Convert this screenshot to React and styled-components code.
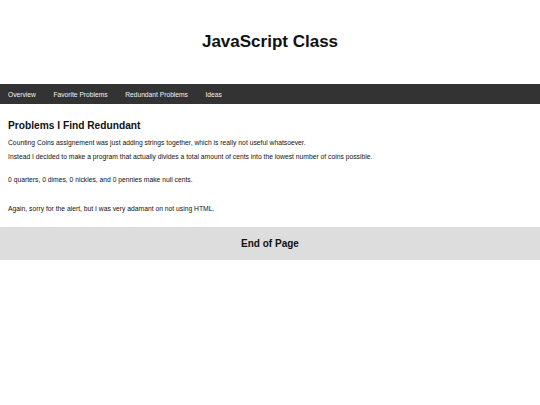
import styled, { createGlobalStyle } from "styled-components";

const GlobalStyle = createGlobalStyle`
  body {
    margin: 0;
    background: #fff;
    font-family: "Liberation Sans", Arial, sans-serif;
    color: #111;
  }
`;

const Header = styled.header`
  height: 84px;
  display: flex;
  align-items: center;
  justify-content: center;
`;

const Title = styled.h1`
  margin: 0;
  font-size: 17px;
  line-height: 20px;
  font-weight: bold;
`;

const NavBar = styled.nav`
  height: 20px;
  background-color: #333;
  display: flex;
  align-items: center;
  gap: 17.5px;
  padding-left: 8px;
`;

const NavLink = styled.a`
  color: #f2f2f2;
  font-size: 6.7px;
  text-decoration: none;
`;

const Content = styled.main`
  padding: 15px 8px 0;
`;

const Heading = styled.h2`
  margin: 0 0 6px;
  font-size: 10.2px;
  line-height: 14px;
  font-weight: bold;
`;

const Text = styled.p`
  margin: 0 0 ${(p) => p.gap ?? 6}px;
  font-size: 6.75px;
  line-height: 8px;
`;

const Footer = styled.footer`
  height: 33px;
  background-color: #ddd;
  display: flex;
  align-items: center;
  justify-content: center;
`;

const FooterTitle = styled.h3`
  margin: 0;
  font-size: 10px;
  font-weight: bold;
`;

const links = ["Overview", "Favorite Problems", "Redundant Problems", "Ideas"];

export default function App() {
  return (
    <>
      <GlobalStyle />
      <Header>
        <Title>JavaScript Class</Title>
      </Header>
      <NavBar>
        {links.map((l) => (
          <NavLink key={l} href="#">
            {l}
          </NavLink>
        ))}
      </NavBar>
      <Content>
        <Heading>Problems I Find Redundant</Heading>
        <Text>
          Counting Coins assignement was just adding strings together, which is
          really not useful whatsoever.
        </Text>
        <Text gap={15}>
          Instead I decided to make a program that actually divides a total
          amount of cents into the lowest number of coins possible.
        </Text>
        <Text gap={21}>
          0 quarters, 0 dimes, 0 nickles, and 0 pennies make null cents.
        </Text>
        <Text gap={14}>
          Again, sorry for the alert, but I was very adamant on not using HTML.
        </Text>
      </Content>
      <Footer>
        <FooterTitle>End of Page</FooterTitle>
      </Footer>
    </>
  );
}
